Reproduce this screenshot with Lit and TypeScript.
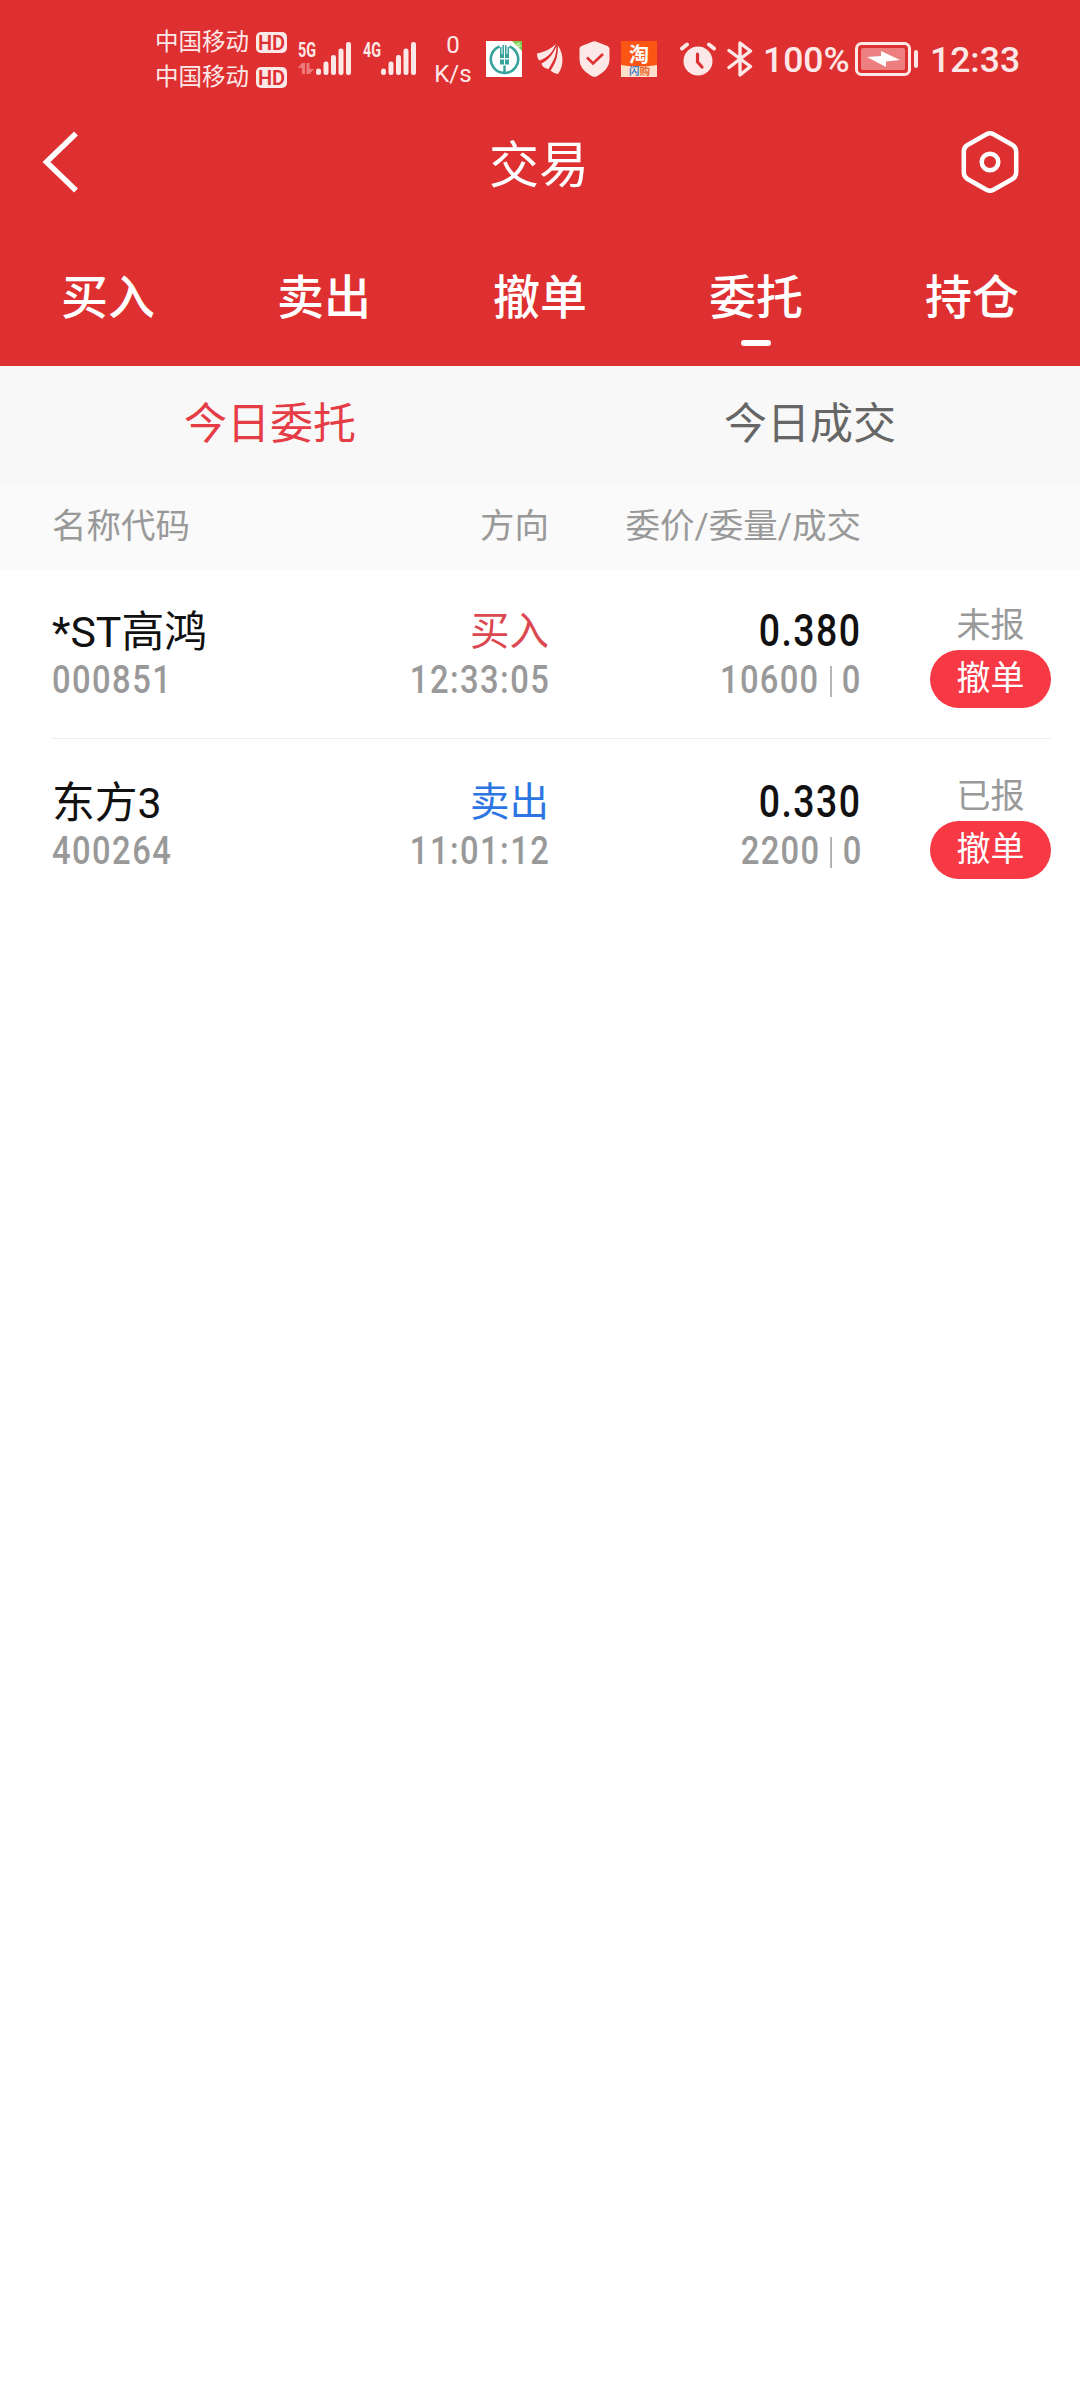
import { LitElement, html, css, svg } from "lit";
import { customElement, property } from "lit/decorators.js";
import { classMap } from "lit/directives/class-map.js";

interface Order {
  name: string;
  code: string;
  side: "buy" | "sell";
  time: string;
  price: string;
  amount: string;
  filled: string;
  status: string;
}

const FONT = css`Roboto, "Noto Sans CJK SC", sans-serif`;

@customElement("status-bar")
class StatusBar extends LitElement {
  static styles = css`
    :host {
      display: flex;
      align-items: center;
      height: 118px;
      padding-left: 155px;
      box-sizing: border-box;
      color: #fde8e8;
      font-family: ${FONT};
    }
    svg { display: block; flex: none; }
    .carriers { display: flex; flex-direction: column; width: 143px; padding-top: 2px; }
    .carrier { display: flex; align-items: center; gap: 7px; height: 35px; font-size: 23.5px; line-height: 35px; }
    .hd {
      width: 31px;
      height: 21px;
      border-radius: 5px;
      background: #fde8e8;
      color: #de3031;
      font-size: 20px;
      font-weight: 600;
      line-height: 22px;
      text-align: center;
    }
    .signal { width: 65px; }
    .rate { width: 52px; margin-left: -1px; padding-top: 2px; font-size: 24px; line-height: 29px; text-align: center; }
    .bank { margin-left: 7px; }
    .wing { margin-left: 15px; }
    .shield { margin-left: 16px; }
    .shop { margin-left: 11px; overflow: visible; }
    .alarm { margin-left: 23px; }
    .bt { margin-left: 11px; }
    .percent { width: 91px; margin-left: 10px; padding-top: 2px; font-size: 35.5px; font-weight: 500; line-height: 40px; }
    .battery { margin-left: 1px; }
    .clock { margin-left: 12px; padding-top: 2px; font-size: 35.5px; font-weight: 500; line-height: 40px; }
  `;

  private signal(label: string, data: boolean) {
    return html`<svg class="signal" width="65" height="40" viewBox="0 0 65 40" fill="#fde8e8">
      <text x="0" y="18" font-family="Roboto" font-size="20" font-weight="700" textLength="18" lengthAdjust="spacingAndGlyphs">${label}</text>
      ${data
        ? svg`<g fill="#ee7b7b"><path d="M0 29L4 24H7V35H4V29z"/><path d="M8.500 24h3v6H16l-4.500 5h-3z"/></g>`
        : ""}
      <rect x="18" y="29.500" width="5" height="6.500" rx="2.500"/>
      <rect x="25.500" y="22.500" width="5" height="13.500" rx="2.200"/>
      <rect x="33" y="16" width="5" height="20" rx="2.200"/>
      <rect x="40.500" y="9.500" width="5" height="26.500" rx="2.200"/>
      <rect x="48" y="3" width="5" height="33" rx="2.200"/>
    </svg>`;
  }

  render() {
    return html`
      <div class="carriers">
        <div class="carrier"><span>中国移动</span><span class="hd">HD</span></div>
        <div class="carrier"><span>中国移动</span><span class="hd">HD</span></div>
      </div>
      ${this.signal("5G", true)}
      ${this.signal("4G", false)}
      <div class="rate"><div>0</div><div>K/s</div></div>
      <svg class="bank" width="36" height="36" viewBox="0 0 36 36">
        <rect width="36" height="36" fill="#fff"/>
        <path d="M26 0h10v10z" fill="#7ccb52"/>
        <path d="M30.500 4l3-2M31.500 6.500l3-2" stroke="#e2f8d4" stroke-width="1.500"/>
        <path d="M13.500 5.500A13.700 13.700 0 1 0 23.500 5.500" fill="none" stroke="#35a39b" stroke-width="2.600"/>
        <g fill="#35a39b">
          <path d="M14 6l1.500 0v7h1V4h1.500v13h-4z"/>
          <path d="M23 6l-1.500 0v7h-1V4h-1.500v13h4z"/>
          <rect x="14" y="18.500" width="4" height="5"/>
          <rect x="19" y="18.500" width="4" height="5"/>
          <rect x="17.300" y="24.500" width="2.400" height="7"/>
        </g>
      </svg>
      <svg class="wing" width="26" height="32" viewBox="0 0 26 32" fill="#fde8e8">
        <path d="M0 10.500C6 9 13 7 19 1C16 9 11 14.500 2.500 17.500C.5 16 0 13 0 10.500z"/>
        <path d="M4.500 20.500C12 17 17 10 19.500 1.500C21.500 9 16.500 18 11.500 26C8 25.500 5 23.500 4.500 20.500z"/>
        <path d="M13.500 27.500C19 20 21.500 11 20.500 2C27.500 11 26.500 24 21 31C18 30.500 15.500 29.500 13.500 27.500z"/>
        <path d="M3 19C11 16 16 10 19.500 2M12.500 27C18 19 20.500 11 20 2" fill="none" stroke="#de3031" stroke-width="1.200"/>
      </svg>
      <svg class="shield" width="31" height="36" viewBox="0 0 31 36">
        <path d="M13.500.8q2-1.300 4 0L28.500 5q2 .8 2 3v10c0 8-5 13-12.500 17.200q-2.500 1.300-5 0C5.500 31 .5 26 .5 18V8q0-2.200 2-3z" fill="#fde8e8"/>
        <path d="M8 16.500l6 6 10-9.500" fill="none" stroke="#de3031" stroke-width="2.600"/>
      </svg>
      <svg class="shop" width="36" height="36" viewBox="0 0 36 36">
        <rect width="36" height="36" fill="#fb5613"/>
        <path d="M0 24q18 3 36 0v12H0z" fill="#ffe0cb"/>
        <text x="18" y="20.500" text-anchor="middle" font-family="Roboto, Noto Sans CJK SC" font-size="20" font-weight="700" fill="#fff">淘</text>
        <text x="8" y="34.300" font-family="Roboto, Noto Sans CJK SC" font-size="10.500" font-weight="700" fill="#e8642a"><tspan fill="#3f7fc8">闪</tspan>购</text>
      </svg>
      <svg class="alarm" width="36" height="34" viewBox="0 0 36 34">
        <circle cx="18" cy="19" r="14.500" fill="#fde8e8"/>
        <g fill="none" stroke-linecap="round">
          <path d="M2 6.500l5-4M34 6.500l-5-4" stroke="#fde8e8" stroke-width="4"/>
          <path d="M17.500 12v8l4.500 5" stroke="#de3031" stroke-width="3.200"/>
        </g>
      </svg>
      <svg class="bt" width="26" height="36" viewBox="0 0 26 36" fill="none" stroke="#fde8e8" stroke-width="3.400" stroke-linejoin="round" stroke-linecap="round">
        <path d="M2 9.500l21.500 16L13 34V2l10.500 8L2 26.500"/>
      </svg>
      <span class="percent">100%</span>
      <svg class="battery" width="63" height="34" viewBox="0 0 63 34">
        <rect x="1.500" y="1.500" width="53" height="31" rx="5" fill="none" stroke="#fde8e8" stroke-width="3"/>
        <rect x="6" y="6" width="44" height="22" rx="2" fill="#ee7f80"/>
        <path d="M12 15l14-1V9l19 9-14 1.500V25z" fill="#fff"/>
        <rect x="59" y="8" width="4" height="18" rx="2" fill="#fde8e8"/>
      </svg>
      <span class="clock">12:33</span>
    `;
  }
}

@customElement("order-row")
class OrderRow extends LitElement {
  @property({ attribute: false }) order!: Order;

  static styles = css`
    :host { display: block; height: 171px; padding: 0 29px 0 52px; font-family: ${FONT}; color: #111; }
    .grid {
      display: grid;
      grid-template-columns: 297px 200px 312px 69px 121px;
      height: 168px;
      border-bottom: 1px solid #ededed;
    }
    :host(:last-of-type) .grid { border-bottom-color: transparent; }
    .cell { padding-top: 38px; }
    .end { display: flex; flex-direction: column; align-items: flex-end; }
    .name, .side, .price { height: 48px; line-height: 48px; white-space: nowrap; }
    .name { font-size: 42.8px; }
    .side { font-size: 39.5px; }
    .buy { color: #dc4850; }
    .sell { color: #2d75e2; }
    .num {
      display: flex;
      width: max-content;
      height: 48px;
      line-height: 48px;
      font-size: 38px;
      font-weight: 500;
      letter-spacing: 1.7px;
      color: #999;
      transform: scaleX(0.86);
      transform-origin: left center;
    }
    .end .num { margin-right: -1.5px; transform-origin: right center; }
    .end .price { font-size: 43.5px; letter-spacing: 1.7px; color: #111; margin-right: -0.5px; }
    .end .volume { letter-spacing: 1.5px; margin-right: -1px; }
    .bar { width: 2px; height: 31px; margin: 10px 12px 0 12px; background: #a9a9ae; }
    .action { grid-column: 5; display: flex; flex-direction: column; align-items: center; padding-top: 35px; }
    .status { height: 40px; line-height: 40px; font-size: 34px; color: #999; }
    .cancel {
      width: 121px;
      height: 58px;
      margin-top: 5px;
      border-radius: 29px;
      background: #f73945;
      color: #fff;
      font-size: 34px;
      line-height: 56px;
      text-align: center;
    }
  `;

  render() {
    const o = this.order;
    return html`<div class="grid">
      <div class="cell">
        <div class="name">${o.name}</div>
        <div class="num">${o.code}</div>
      </div>
      <div class="cell end">
        <div class=${classMap({ side: true, buy: o.side === "buy", sell: o.side === "sell" })}>${o.side === "buy" ? "买入" : "卖出"}</div>
        <div class="num">${o.time}</div>
      </div>
      <div class="cell end">
        <div class="num price">${o.price}</div>
        <div class="num volume"><span>${o.amount}</span><span class="bar"></span><span>${o.filled}</span></div>
      </div>
      <div class="action">
        <div class="status">${o.status}</div>
        <div class="cancel">撤单</div>
      </div>
    </div>`;
  }
}

@customElement("app-root")
class AppRoot extends LitElement {
  static styles = css`
    :host { display: block; width: 1080px; height: 2400px; background: #fff; font-family: ${FONT}; overflow: hidden; }
    .top { height: 366px; background: #de3031; color: #fff; }
    .nav { display: grid; grid-template-columns: 120px 1fr 120px; align-items: center; height: 88px; }
    .nav svg { display: block; }
    .back { margin-left: 42px; }
    .title { padding-top: 7px; font-size: 50px; line-height: 60px; text-align: center; padding-right: 2px; }
    .tabs { display: grid; grid-template-columns: repeat(5, 1fr); padding-top: 62px; }
    .tab { display: flex; flex-direction: column; align-items: center; font-size: 47px; font-weight: 500; line-height: 60px; }
    .active::after { content: ""; width: 30px; height: 6px; margin-top: 12px; border-radius: 3px; background: #fff; }
    .subtabs { display: grid; grid-template-columns: 1fr 1fr; height: 118px; background: #f8f8f8; }
    .subtab { color: #666; font-size: 43px; line-height: 117px; text-align: center; }
    .on { color: #e63c46; }
    .heads {
      display: grid;
      grid-template-columns: 297px 200px 312px;
      height: 86px;
      padding-left: 52px;
      background: #fafafa;
      color: #999;
      font-size: 34.5px;
      line-height: 84px;
    }
    .right { text-align: right; }
  `;

  private tabs = ["买入", "卖出", "撤单", "委托", "持仓"];

  private orders: Order[] = [
    { name: "*ST高鸿", code: "000851", side: "buy", time: "12:33:05", price: "0.380", amount: "10600", filled: "0", status: "未报" },
    { name: "东方3", code: "400264", side: "sell", time: "11:01:12", price: "0.330", amount: "2200", filled: "0", status: "已报" },
  ];

  render() {
    return html`
      <div class="top">
        <status-bar></status-bar>
        <div class="nav">
          <svg class="back" width="38" height="62" viewBox="0 0 38 62" fill="none" stroke="#fff" stroke-width="5.500">
            <path d="M34 2.500L4.500 31 34 59.500"/>
          </svg>
          <div class="title">交易</div>
          <svg width="60" height="64" viewBox="-30 -32 60 64" fill="none" stroke="#fff" stroke-width="4.500">
            <path d="M-3.500-27.700Q0-29.700 3.500-27.700L22.500-17Q26.200-14.800 26.200-10.500V10.500Q26.200 14.800 22.500 17L3.500 27.700Q0 29.700-3.500 27.700L-22.500 17Q-26.200 14.800-26.200 10.500V-10.500Q-26.200-14.800-22.500-17Z"/>
            <circle r="8.300"/>
          </svg>
        </div>
        <div class="tabs">
          ${this.tabs.map((t) => html`<div class=${classMap({ tab: true, active: t === "委托" })}>${t}</div>`)}
        </div>
      </div>
      <div class="subtabs">
        <div class="subtab on">今日委托</div>
        <div class="subtab">今日成交</div>
      </div>
      <div class="heads">
        <div>名称代码</div>
        <div class="right">方向</div>
        <div class="right">委价/委量/成交</div>
      </div>
      ${this.orders.map((o) => html`<order-row .order=${o}></order-row>`)}
    `;
  }
}
